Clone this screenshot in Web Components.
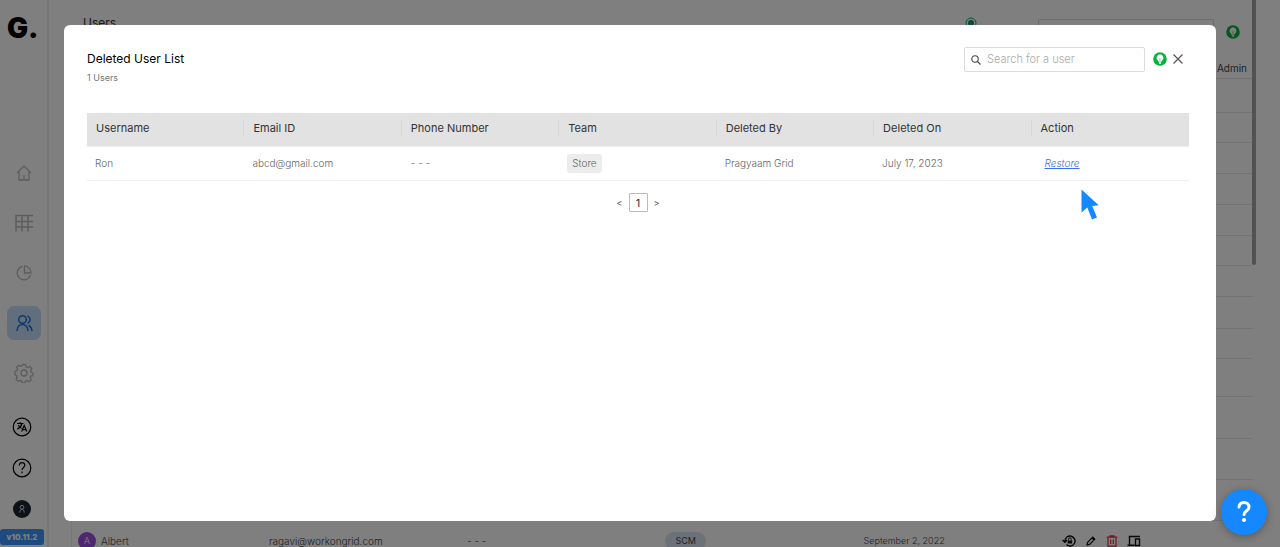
<!DOCTYPE html>
<html lang="en">
<head>
<meta charset="utf-8">
<meta name="viewport" content="width=device-width, initial-scale=1">
<title>Users</title>
<style>
   html, body { height: 100%; }
   body {
      margin: 0;
      overflow: hidden;
      background: #fff;
      font-family: Inter, "Liberation Sans", sans-serif;
      font-size: 10px;
   }
</style>
</head>
<body>
<grid-app>
   <side-bar slot="side">
      <nav-item label="Home">
         <svg width="18" height="18" viewBox="0 0 18 18" fill="none" stroke="currentColor" stroke-width="1.3" stroke-linejoin="round"><path d="M2 9 9 2l7 7M4 8v8h10V8M9 11v5"/></svg>
      </nav-item>
      <nav-item label="Grids">
         <svg width="18" height="18" viewBox="0 0 18 18" fill="none" stroke="currentColor" stroke-width="1.5"><path d="M1 17.500V1.500h17M1 7.500h17M1 13h17M7 1.500v16M13 1.500v16"/></svg>
      </nav-item>
      <nav-item label="Reports">
         <svg width="18" height="18" viewBox="0 0 18 18" fill="none" stroke="currentColor" stroke-width="1.3" stroke-linejoin="round"><path d="M7.300 2.400a6.800 6.800 0 1 0 8.200 8.700M9.500 1.800V9H16a7 7 0 0 0-6.500-7.200z"/></svg>
      </nav-item>
      <nav-item label="Users" active>
         <svg width="18" height="18" viewBox="0 0 18 18" fill="none" stroke="currentColor" stroke-width="1.500" stroke-linecap="round"><circle cx="7.500" cy="5.500" r="3.800"/><path d="M2 16.500c.5-4 2.500-6 5.500-6s5 2 5.500 6M13 2.200c2.800 1.500 2.800 5.500 0 6.800M14 11.500c1.500.8 2.500 2.500 3 5"/></svg>
      </nav-item>
      <nav-item label="Settings">
         <svg width="20" height="20" viewBox="0 0 20 20" fill="none" stroke="currentColor" stroke-width="1.300" stroke-linejoin="round"><circle cx="10" cy="10" r="3"/><path d="M8.500 1.500h3l.6 2.300 1.500.7 2.200-1.100 2 2.200-1.200 2 .6 1.600 1.800.8v2.600l-2.200.6-.6 1.400 1.100 2.200-2.200 2-2-1.200-1.500.6-.8 1.700H8.300l-.6-2-1.500-.6-2.200 1-1.900-2.200 1.100-2-.6-1.500-1.700-.8V8.300l2-.6.7-1.500-1-2.100 2.100-1.900 2 1.200 1.400-.6z"/></svg>
      </nav-item>
   </side-bar>
   <users-page slot="page"></users-page>
   <modal-dialog slot="modal" heading="Deleted User List" note="1 Users">
      <user-search slot="tools" placeholder="Search for a user"></user-search>
      <tip-bulb slot="tools"></tip-bulb>
      <deleted-users></deleted-users>
      <page-picker></page-picker>
   </modal-dialog>
   <help-button slot="help"></help-button>
</grid-app>

<script>
class baseElement extends HTMLElement {
   constructor() {
      super();
      this.attachShadow({mode: 'open'});
   }
   connectedCallback() {
      const template = document.createElement('template');
      template.innerHTML = `<style>* { box-sizing: border-box; } button { font: inherit; padding: 0; border: 0; background: none; color: inherit; cursor: pointer; } svg { display: block; }${this.getStyles()}</style>${this.getTemplate()}`;
      this.shadowRoot.replaceChildren(template.content.cloneNode(true));
   }
}

class gridApp extends baseElement {
   getTemplate() {
      return `
      <slot name="side"></slot>
      <slot name="page"></slot>
      <slot name="modal"></slot>
      <slot name="help"></slot>`;
   }
   getStyles() {
      return `:host { display: flex; height: 100vh; overflow: hidden; }`;
   }
}
customElements.define('grid-app', gridApp);

class sideBar extends baseElement {
   getTemplate() {
      return `
      <a class="logo" href="#" aria-label="Home page">G.</a>
      <nav><slot></slot></nav>
      <div class="bottom">
         <button aria-label="Language">
            <svg width="20" height="20" viewBox="0 0 20 20" fill="none" stroke="#000" stroke-width="1.200"><circle cx="10" cy="10" r="8.800"/><path d="M5 6.500h6.500M8.200 5.200v1.300M10 6.500c-.6 2.500-2.200 4.300-4.700 5.700M6.400 8c.8 1.600 1.800 2.700 3.200 3.500M9.600 14.500l2.600-6 2.600 6M10.500 12.700h3.400"/></svg>
         </button>
         <button aria-label="Help">
            <svg width="20" height="20" viewBox="0 0 20 20" fill="none" stroke="#000" stroke-width="1.200"><circle cx="10" cy="10" r="8.800"/><path d="M7.300 7.500C7.400 3.600 12.900 3.700 12.800 7.200c0 2.200-2.800 2.300-2.800 4.800"/><path d="M10 13.600v1.600"/></svg>
         </button>
         <button aria-label="Profile">
            <svg width="20" height="20" viewBox="0 0 20 20" fill="none" stroke="#ddd" stroke-width="1"><circle cx="10" cy="10" r="9" fill="#1b2230" stroke="none"/><circle cx="10" cy="8.300" r="1.900"/><path d="M7.700 13.600c.2-4.200 4.400-4.200 4.600 0"/></svg>
         </button>
      </div>
      <span class="version">v10.11.2</span>`;
   }
   getStyles() {
      return `
      :host {
         display: flex;
         flex-direction: column;
         flex: none;
         width: 47px;
         padding-bottom: 2px;
         border-right: 2px solid #efefef;
      }
      .logo {
         padding: 10px 0 0 7px;
         font-size: 28px;
         line-height: 36px;
         font-weight: 900;
         color: #000;
         text-decoration: none;
      }
      nav { display: flex; flex-direction: column; gap: 16px; padding: 110px 0 0 7px; }
      .bottom { display: flex; flex-direction: column; gap: 21px; margin-top: auto; padding: 0 0 10px 12px; }
      .bottom button { width: 20px; height: 20px; }
      .version {
         width: 44px;
         border-radius: 3px;
         background: #3c96ff;
         color: #fff;
         font-size: 8px;
         line-height: 16px;
         font-weight: 800;
         text-align: center;
      }`;
   }
}
customElements.define('side-bar', sideBar);

class navItem extends baseElement {
   getTemplate() {
      return `<a href="#" aria-label="${this.getAttribute('label')}"><slot></slot></a>`;
   }
   getStyles() {
      return `
      :host { display: block; }
      a {
         display: flex;
         align-items: center;
         justify-content: center;
         width: 34px;
         height: 34px;
         border-radius: 7px;
         color: #bbb;
      }
      :host([active]) a { background: #c4dcf8; color: #1a72e0; }`;
   }
}
customElements.define('nav-item', navItem);

class tipBulb extends baseElement {
   getTemplate() {
      return `
      <button aria-label="Tips">
         <svg width="14" height="14" viewBox="0 0 14 14"><circle cx="7" cy="7" r="6.800" fill="#07b23b"/><path d="M7 2.200a3.600 3.600 0 0 0-2.100 6.400c.4.4.5.7.5 1.200h3.200c0-.5.1-.8.5-1.200A3.600 3.600 0 0 0 7 2.200z" fill="#fff"/><path d="M5.900 10.200h2.200v1.500H5.900z" fill="#fff"/><path d="M7 7v2.500M6.200 6.400 7 7.200l.8-.8" fill="none" stroke="#07b23b" stroke-width=".5"/></svg>
      </button>`;
   }
   getStyles() {
      return `:host { display: block; } button { display: block; }`;
   }
}
customElements.define('tip-bulb', tipBulb);

class usersPage extends baseElement {
   getTemplate() {
      // row heights of the list above the last visible user
      const rows = [34, 30, 31, 31, 31, 30, 31, 32, 30, 38, 42, 41, 41];
      return `
      <main>
         <header>
            <h1>Users</h1>
            <svg class="status" width="12" height="12" viewBox="0 0 12 12"><circle cx="6" cy="6" r="5" fill="none" stroke="#10a878"/><circle cx="6" cy="6" r="3" fill="#109868"/></svg>
            <span class="field"></span>
            <tip-bulb></tip-bulb>
         </header>
         <table>
            <colgroup><col class="first"><col><col><col><col><col></colgroup>
            <thead><tr><th colspan="6">Admin</th></tr></thead>
            <tbody>
               ${rows.map(height => `<tr style="height:${height}px"><td colspan="6"></td></tr>`).join('')}
               <tr class="user">
                  <td><div class="name"><span class="avatar">A</span>Albert</div></td>
                  <td>ragavi@workongrid.com</td>
                  <td>- - -</td>
                  <td><span class="team">SCM</span></td>
                  <td class="date">September 2, 2022</td>
                  <td>
                     <div class="actions">
                        <button aria-label="Reset password"><svg width="14" height="14" viewBox="0 0 14 14" fill="none" stroke="#111" stroke-width="1.400"><path d="M3 7a5 5 0 1 1 1.500 3.600M.5 6 3 8.200 5.200 6"/><path d="M6.500 6.500V5.300a1.400 1.400 0 0 1 2.800 0v1.200" stroke-width="1"/><path d="M5.700 6.500h4.400v3H5.700z" fill="#111" stroke="none"/></svg></button>
                        <button aria-label="Edit"><svg width="12" height="12" viewBox="0 0 12 12" fill="none" stroke="#111" stroke-width="1.200"><path d="m2 10 .6-2.600 5.200-5.200 2 2-5.200 5.200zM7 3l2 2"/></svg></button>
                        <button aria-label="Delete"><svg width="12" height="12" viewBox="0 0 12 12" fill="none" stroke="#e0303c" stroke-width="1.200"><path d="M.8 2.200h10.400M4 2V.8h4V2M2 2.200v9h8v-9M4.700 4.500v4.600M7.300 4.500v4.600"/></svg></button>
                        <button aria-label="Devices"><svg width="14" height="12" viewBox="0 0 14 12" fill="none" stroke="#111" stroke-width="1.400"><path d="M13 1.500H2.500V10M.5 10.300h7M8.500 4h4v6.500h-4z"/></svg></button>
                     </div>
                  </td>
               </tr>
            </tbody>
         </table>
      </main>
      <div class="scroll"></div>`;
   }
   getStyles() {
      return `
      :host { display: flex; flex: 1; min-width: 0; }
      main { flex: 1; min-width: 0; padding-left: 22px; }
      header { display: flex; align-items: flex-start; height: 57px; padding: 15px 12px 0 12px; }
      h1 { margin: 0; font-size: 12px; line-height: 16px; font-weight: 400; color: #333; }
      .status { margin: 2px 61px 0 auto; }
      .field { width: 176px; height: 26px; margin: 4px 12px 0 0; border: 1px solid #d9d9d9; border-radius: 2px; }
      header tip-bulb { margin-top: 10px; }
      table { width: 100%; table-layout: fixed; border-collapse: separate; border-spacing: 0; border-left: 1px solid #eee; }
      .first { width: 189px; }
      th { height: 22px; padding: 0 5px 0 0; border-bottom: 1px solid #e2e2e2; font-size: 10px; line-height: 14px; font-weight: 400; text-align: right; color: #444; }
      td { padding: 0 8px; border-bottom: 1px solid #e6e6e6; font-size: 10px; line-height: 14px; font-weight: 300; color: #444; }
      .user { height: 40px; }
      .name { display: flex; align-items: center; gap: 5px; }
      td:first-child { padding-left: 6px; }
      .date { font-size: 9px; }
      .avatar { width: 18px; border-radius: 9px; background: #9b51e0; color: #fff; font-size: 9px; line-height: 18px; text-align: center; }
      .team { display: inline-block; padding: 1px 10px; border-radius: 9px; background: #d8e4f4; font-size: 9px; font-weight: 400; line-height: 16px; }
      .actions { display: flex; align-items: center; gap: 9px; }
      .scroll { flex: none; width: 4px; height: 265px; margin-right: 24px; border-radius: 0 0 2px 2px; background: #a4a4a4; }`;
   }
}
customElements.define('users-page', usersPage);

class modalDialog extends baseElement {
   getTemplate() {
      return `
      <section role="dialog" aria-modal="true" aria-labelledby="heading">
         <header>
            <div class="titles">
               <h2 id="heading">${this.getAttribute('heading')}</h2>
               <p>${this.getAttribute('note')}</p>
            </div>
            <slot name="tools"></slot>
            <button class="close" aria-label="Close">
               <svg width="10" height="10" viewBox="0 0 10 10" stroke="#555" stroke-width="1.200"><path d="m.5.500 9 9M9.500.500l-9 9"/></svg>
            </button>
         </header>
         <slot></slot>
      </section>`;
   }
   getStyles() {
      return `
      :host {
         position: fixed;
         inset: 0;
         display: flex;
         padding: 25px 5% 26px;
         background: rgba(0, 0, 0, 0.5);
      }
      section {
         flex: 1;
         min-width: 0;
         padding: 22px 27px 0 23px;
         border-radius: 6px;
         background: #fff;
      }
      header { display: flex; align-items: flex-start; padding-bottom: 28px; }
      .titles { flex: 1; }
      h2 { margin: 0; font-size: 12px; line-height: 24px; font-weight: 400; color: #000; }
      p { margin: 0; font-size: 9px; line-height: 14px; color: #777; }
      ::slotted(tip-bulb) { margin: 5px 6px 0 8px; }
      .close { margin: 7px 6px 0 0; }`;
   }
}
customElements.define('modal-dialog', modalDialog);

class userSearch extends baseElement {
   getTemplate() {
      return `
      <label>
         <svg width="10" height="10" viewBox="0 0 10 10" fill="none" stroke="#444" stroke-width="1.100"><circle cx="4" cy="4" r="3.200"/><path d="m6.300 6.300 3.200 3.200"/></svg>
         <input type="text" aria-label="${this.getAttribute('placeholder')}" placeholder="${this.getAttribute('placeholder')}">
      </label>`;
   }
   getStyles() {
      return `
      :host { display: block; width: 181px; }
      label { display: flex; align-items: center; gap: 6px; height: 25px; padding: 0 6px; border: 1px solid #dcdcdc; border-radius: 2px; }
      svg { flex: none; }
      input { flex: 1; min-width: 0; padding: 0 0 2px; border: 0; outline: 0; background: none; font: inherit; font-size: 11px; line-height: 16px; font-weight: 300; color: #333; }
      input::placeholder { color: #aaa; }`;
   }
}
customElements.define('user-search', userSearch);

class deletedUsers extends baseElement {
   getTemplate() {
      const columns = ['Username', 'Email ID', 'Phone Number', 'Team', 'Deleted By', 'Deleted On', 'Action'];
      return `
      <table>
         <thead>
            <tr>${columns.map(column => `<th scope="col"><div>${column}</div></th>`).join('')}</tr>
         </thead>
         <tbody>
            <tr>
               <td>Ron</td>
               <td>abcd@gmail.com</td>
               <td class="phone">- - -</td>
               <td><span class="team">Store</span></td>
               <td>Pragyaam Grid</td>
               <td>July 17, 2023</td>
               <td class="action">
                  <a href="#">Restore</a>
                  <svg class="pointer" width="18" height="31" viewBox="0 0 18 31"><path d="M.5.500v23l5.800-5L11 30.500l5-2-4.800-11.500 6.500-.7z" fill="#1489ff"/></svg>
               </td>
            </tr>
         </tbody>
      </table>`;
   }
   getStyles() {
      return `
      :host { display: block; }
      table { width: 100%; table-layout: fixed; border-collapse: separate; border-spacing: 0; }
      th { padding: 7px 0 10px 9px; background: #e2e2e2; border-bottom: 1px solid #eee; text-align: left; }
      th div { border-right: 1px solid #d8d8d8; font-size: 11px; line-height: 16px; font-weight: 400; color: #333; }
      th:last-child div { border: 0; }
      td { height: 34px; padding: 0 0 1px 8px; border-bottom: 1px solid #f0f0f0; font-size: 10px; line-height: 16px; font-weight: 300; color: #666; }
      .phone { padding-left: 9px; }
      .team { display: inline-block; padding: 1px 5px; border-radius: 3px; background: #ececec; line-height: 17px; }
      .action { position: relative; padding-left: 13px; }
      a { font-style: italic; color: #3c6cf6; }
      .pointer { position: absolute; left: 49px; top: 42px; }`;
   }
}
customElements.define('deleted-users', deletedUsers);

class pagePicker extends baseElement {
   getTemplate() {
      return `
      <button aria-label="Previous page">&lt;</button>
      <button class="current">1</button>
      <button aria-label="Next page">&gt;</button>`;
   }
   getStyles() {
      return `
      :host { display: flex; justify-content: center; align-items: center; gap: 6px; padding-top: 12px; color: #555; font-size: 9px; }
      .current { width: 19px; height: 19px; border: 1px solid #bbb; border-radius: 1px; color: #333; font-size: 11px; line-height: 16px; }`;
   }
}
customElements.define('page-picker', pagePicker);

class helpButton extends baseElement {
   getTemplate() {
      return `
      <button aria-label="Help">
         <svg width="14" height="24" viewBox="0 0 14 24" fill="none" stroke="#fff" stroke-width="3" stroke-linecap="round"><path d="M2 7C2.300.800 12 1 12 7c0 4-5 4-5 7.500"/><circle cx="7" cy="20" r="2.100" fill="#fff" stroke="none"/></svg>
      </button>`;
   }
   getStyles() {
      return `
      :host { position: fixed; right: 13px; bottom: 12px; }
      button {
         display: flex;
         align-items: center;
         justify-content: center;
         width: 46px;
         height: 46px;
         border-radius: 50%;
         background: #1688ff;
         box-shadow: 0 2px 8px rgba(0, 0, 0, 0.3);
      }`;
   }
}
customElements.define('help-button', helpButton);
</script>
</body>
</html>
